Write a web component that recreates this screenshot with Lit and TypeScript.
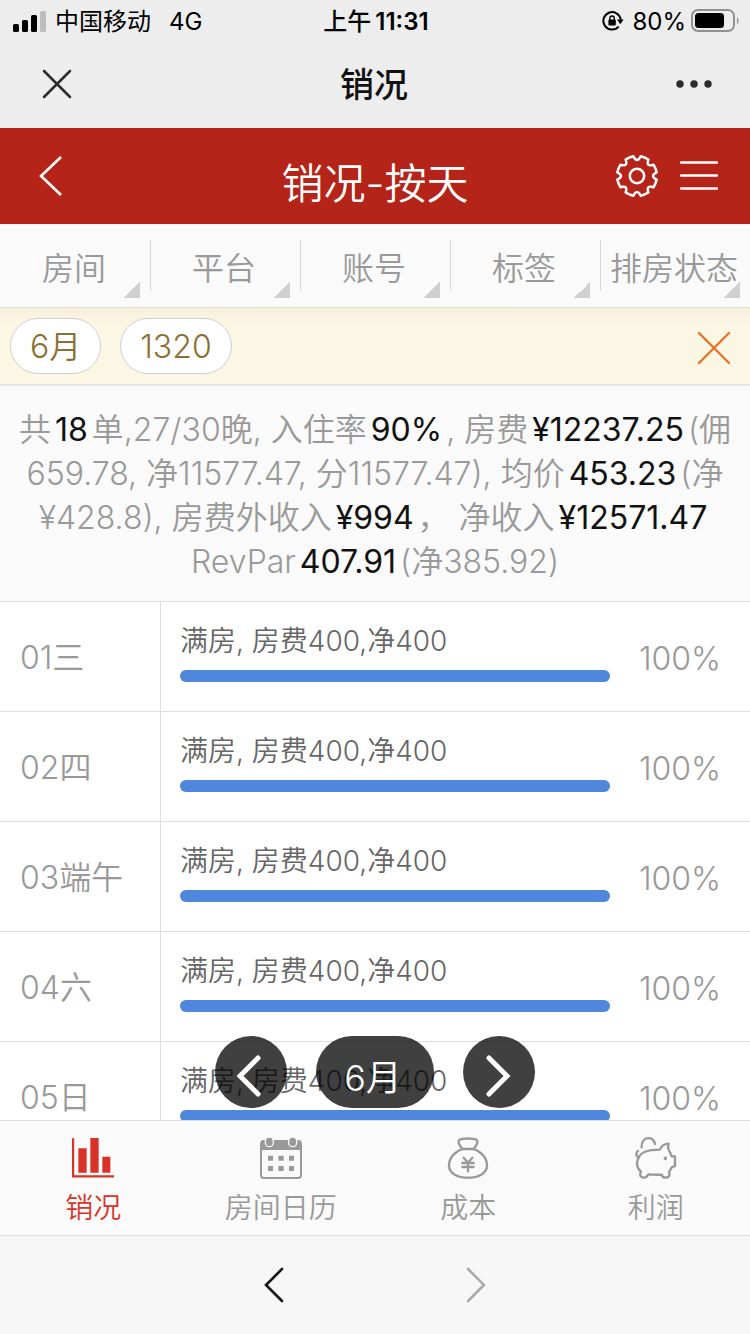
import { LitElement, html, css, svg } from "lit";
import { customElement, property, state } from "lit/decorators.js";
import { classMap } from "lit/directives/class-map.js";
import { styleMap } from "lit/directives/style-map.js";

/** Outline of a cog with eight teeth, centred on the origin. */
function cogPath(outer: number, inner: number): string {
  const point = (radius: number, degrees: number) => {
    const angle = (degrees * Math.PI) / 180;
    return `${(radius * Math.cos(angle)).toFixed(2)} ${(radius * Math.sin(angle)).toFixed(2)}`;
  };
  let d = "";
  for (let i = 0; i < 8; i++) {
    const c = 22.5 + i * 45;
    d += `${i === 0 ? "M" : "L"}${point(outer, c - 12)}`;
    d += `Q${point(outer + 0.3, c)} ${point(outer, c + 12)}`;
    d += `L${point(inner + 1.2, c + 14)}Q${point(inner - 3, c + 22.5)} ${point(inner + 1.2, c + 31)}`;
  }
  return d + "Z";
}

const icons = {
  signal: html`<svg width="34" height="22" viewBox="0 0 34 22" aria-hidden="true">
    <rect x="0" y="14" width="6" height="8" rx="1.5" />
    <rect x="9" y="10" width="6" height="12" rx="1.5" />
    <rect x="18" y="5" width="6" height="17" rx="1.5" />
    <rect x="27" y="1" width="6" height="21" rx="1.5" fill="#bdbdbd" />
  </svg>`,
  lock: html`<svg width="22" height="20" viewBox="0 0 22 20" aria-hidden="true">
    <path d="M16.6 15.6A8.7 8.7 0 1 1 18.700 8.6" fill="none" stroke="#000" stroke-width="2" />
    <path d="M15 8.600h6.600l-3.300 4.600z" />
    <rect x="6.4" y="8.6" width="7.4" height="6" rx="1" />
    <path d="M7.9 9V7.2a2.2 2.2 0 0 1 4.4 0V9" fill="none" stroke="#000" stroke-width="1.4" />
  </svg>`,
  battery: html`<svg width="48" height="24" viewBox="0 0 48 24" aria-hidden="true">
    <rect x="1" y="1" width="42" height="21" rx="6" fill="none" stroke="#929292" stroke-width="2" />
    <rect x="4" y="4" width="29" height="15" rx="3.5" />
    <path d="M46 8c2 1.500 2 6 0 7z" fill="#929292" />
  </svg>`,
  close: html`<svg width="30" height="30" viewBox="0 0 30 30" aria-hidden="true">
    <path d="M2 2 28 28M28 2 2 28" fill="none" stroke="currentColor" stroke-width="2.5" stroke-linecap="round" />
  </svg>`,
  clear: html`<svg width="34" height="34" viewBox="0 0 34 34" aria-hidden="true">
    <path d="M2 2 32 32M32 2 2 32" fill="none" stroke="currentColor" stroke-width="2.4" stroke-linecap="round" />
  </svg>`,
  more: html`<svg width="36" height="8" viewBox="0 0 36 8" aria-hidden="true" fill="currentColor">
    <circle cx="4" cy="4" r="3.7" /><circle cx="18" cy="4" r="3.7" /><circle cx="32" cy="4" r="3.7" />
  </svg>`,
  back: html`<svg width="24" height="42" viewBox="0 0 24 42" aria-hidden="true">
    <path d="M22 2 2 21 22 40" fill="none" stroke="currentColor" stroke-width="2.6" />
  </svg>`,
  cog: html`<svg width="46" height="46" viewBox="-23 -23 46 46" aria-hidden="true" fill="none" stroke="currentColor" stroke-width="2.500" stroke-linejoin="round">
    <path d=${cogPath(20, 17)} /><circle r="7.200" />
  </svg>`,
  menu: html`<svg width="38" height="32" viewBox="0 0 38 32" aria-hidden="true">
    <path d="M1 2.500H37M1 15.500H37M1 28.500H37" fill="none" stroke="currentColor" stroke-width="2.4" stroke-linecap="round" />
  </svg>`,
  left: html`<svg width="28" height="42" viewBox="0 0 28 42" aria-hidden="true">
    <path d="M21 3 3 21 21 39" fill="none" stroke="currentColor" stroke-width="5" stroke-linecap="round" />
  </svg>`,
  right: html`<svg width="26" height="42" viewBox="0 0 26 42" aria-hidden="true">
    <path d="M3 3 21 21 3 39" fill="none" stroke="currentColor" stroke-width="5" stroke-linecap="round" />
  </svg>`,
  historyBack: html`<svg width="20" height="36" viewBox="0 0 20 36" aria-hidden="true">
    <path d="M18 2 2 18 18 34" fill="none" stroke="currentColor" stroke-width="2.600" stroke-linecap="round" />
  </svg>`,
  historyForward: html`<svg width="20" height="36" viewBox="0 0 20 36" aria-hidden="true">
    <path d="M2 2 18 18 2 34" fill="none" stroke="currentColor" stroke-width="2.600" stroke-linecap="round" />
  </svg>`,
};

const tabIcons: Record<string, unknown> = {
  chart: svg`<path d="M3 4V118H126" fill="none" stroke="currentColor" stroke-width="7" />
    <path d="M19 34h25v73H19zM55 3h25v104H55zM91 59h24v48H91z" fill="currentColor" />`,
  calendar: svg`<rect x="3" y="12" width="120" height="111" rx="9" fill="none" stroke="currentColor" stroke-width="6" />
    <path d="M3 39V19q0-9 9-9H114q9 0 9 9V39z" fill="currentColor" />
    <rect x="16" y="0" width="24" height="29" rx="12" fill="currentColor" stroke="#fafafa" stroke-width="4" />
    <rect x="86" y="0" width="24" height="29" rx="12" fill="currentColor" stroke="#fafafa" stroke-width="4" />
    <path d="M24 56h15v15H24zM55 56h16v15H55zM87 56h15v15H87zM24 87h15v15H24zM55 87h16v15H55zM87 87h15v15H87z" fill="currentColor" />`,
  bag: svg`<g fill="none" stroke="currentColor" stroke-width="7" stroke-linecap="round" stroke-linejoin="round">
    <path d="M46 36C42 28 30 19 36 9C46 3 80 3 90 9C96 19 84 28 80 36" />
    <path d="M46 36H80C104 44 120 64 120 86C120 110 92 122 63 122C34 122 6 110 6 86C6 64 22 44 46 36Z" />
    <path d="M50 62 63 77 76 62M63 77V103M46 78H80M46 90H80" />
  </g>`,
  pig: svg`<g fill="none" stroke="currentColor" stroke-width="7" stroke-linecap="round" stroke-linejoin="round">
    <path d="M9 42C2 46 2 58 11 62C18 44 42 38 74 38C80 26 90 20 101 20C97 32 101 42 106 48L110 58H120V87L110 91C108 99 102 102 102 106C106 116 100 122 92 122C84 122 81 118 80 113Q60 114 40 112C37 119 34 122 27 122C16 122 13 114 18 104C5 94 3 76 11 62" />
    <path d="M20 31C18 -2 56 -6 60 21" />
    <circle cx="91" cy="64" r="2" fill="currentColor" />
  </g>`,
};

const baseText = css`
  button, select, a {
    font: inherit;
    color: inherit;
    letter-spacing: inherit;
  }
  button {
    display: flex;
    align-items: center;
    justify-content: center;
    padding: 0;
    border: 0;
    background: none;
    cursor: pointer;
  }
  svg { display: block; flex: none; }
`;

interface Day { label: string; note: string; rate: number; }

@customElement("status-bar")
class StatusBar extends LitElement {
  static styles = [baseText, css`
    :host {
      display: grid;
      grid-template-columns: 1fr auto 1fr;
      align-items: center;
      height: 40px;
      padding: 0 11px 0 13px;
      font-size: 24px;
      line-height: 40px;
      color: #000;
    }
    .group { display: flex; align-items: center; gap: 8px; }
    .group span, .time { padding-top: 2px; }
    .end { justify-content: flex-end; gap: 5px; }
    .group .lock { padding: 0; margin-right: 3px; }
    .network { margin-left: 10px; }
    .time { display: flex; gap: 4px; font-weight: 600; }
    .time .cjk { font-weight: 500; }
  `];
  render() {
    return html`
      <div class="group">${icons.signal}<span>中国移动</span><span class="network">4G</span></div>
      <div class="time"><span class="cjk">上午</span><span>11:31</span></div>
      <div class="group end"><div class="lock">${icons.lock}</div><span>80%</span>${icons.battery}</div>
    `;
  }
}

@customElement("day-row")
class DayRow extends LitElement {
  @property({ attribute: false }) day!: Day;
  static styles = css`
    :host {
      display: grid;
      grid-template-columns: 161px 1fr auto;
      height: 109px;
      border-bottom: 1px solid #dedede;
      color: #999;
      font-size: 32px;
      background: #fff;
    }
    .date {
      display: flex;
      align-items: center;
      padding: 2px 0 0 20px;
      border-right: 1px solid #dedede;
    }
    .detail {
      display: flex;
      flex-direction: column;
      gap: 9px;
      padding: 19px 29px 0 19px;
    }
    .note { font-size: 28px; line-height: 40px; color: #666; white-space: nowrap; }
    .track { height: 12px; border-radius: 6px; background: #eee; }
    .fill { height: 100%; border-radius: 6px; background: #4f87dc; }
    .rate { align-self: center; padding: 4px 29px 0 0; }
  `;
  render() {
    const { label, note, rate } = this.day;
    return html`
      <div class="date">${label}</div>
      <div class="detail">
        <div class="note">${note}</div>
        <div class="track" role="progressbar" aria-label=${label} aria-valuenow=${rate}>
          <div class="fill" style=${styleMap({ width: `${rate}%` })}></div>
        </div>
      </div>
      <div class="rate">${rate}%</div>
    `;
  }
}

@customElement("app-root")
class AppRoot extends LitElement {
  @state() private month = 6;
  @state() private tab = "chart";

  private filters = ["房间", "平台", "账号", "标签", "排房状态"];
  private days: Day[] = ["01三", "02四", "03端午", "04六", "05日"].map((label) => ({
    label,
    note: "满房, 房费400,净400",
    rate: 100,
  }));
  private tabs = [
    { id: "chart", label: "销况" },
    { id: "calendar", label: "房间日历" },
    { id: "bag", label: "成本" },
    { id: "pig", label: "利润" },
  ];

  static styles = [baseText, css`
    :host {
      display: flex;
      flex-direction: column;
      height: 100vh;
      overflow: hidden;
      background: #fafafa;
      color: #999;
      font-family: Inter, "Noto Sans CJK SC", sans-serif;
      font-weight: 350;
      font-size: 32px;
      line-height: 44px;
    }
    .shell { flex: none; background: #ededed; font-weight: 400; }
    .titlebar {
      display: grid;
      grid-template-columns: 1fr auto 1fr;
      align-items: center;
      height: 88px;
      padding: 0 38px;
      color: #2b2b2b;
    }
    .titlebar h1 { margin: 0; padding: 2px 2px 0 0; font-size: 34px; font-weight: 500; color: #111; }
    .titlebar button:last-child { justify-self: end; }
    .titlebar button:first-child { justify-self: start; padding-left: 4px; }
    .header {
      flex: none;
      display: grid;
      grid-template-columns: 1fr auto 1fr;
      align-items: center;
      height: 96px;
      padding: 0 32px;
      background: #b42418;
      color: #fff;
    }
    .header h2 { margin: 0; padding-top: 16px; font-size: 42px; line-height: 60px; font-weight: 350; }
    .header .back { justify-self: start; padding-left: 7px; }
    .actions { display: flex; justify-content: flex-end; align-items: center; gap: 20px; }
    .filters {
      flex: none;
      display: grid;
      grid-template-columns: repeat(5, 1fr);
      height: 83px;
      border-bottom: 1px solid #dfdccf;
    }
    .filter { position: relative; display: flex; align-items: center; }
    .filter:not(:last-child)::before {
      content: "";
      position: absolute;
      right: -1px;
      top: 16px;
      bottom: 16px;
      border-right: 1px solid #d8d8d8;
    }
    .filter::after {
      content: "";
      position: absolute;
      right: 10px;
      bottom: 9px;
      width: 16px;
      height: 16px;
      background: linear-gradient(135deg, transparent 50%, #d0d0d0 50%);
      pointer-events: none;
    }
    .filter select {
      width: 100%;
      height: 100%;
      padding: 6px 2px 0 0;
      border: 0;
      appearance: none;
      background: none;
      text-align: center;
      text-align-last: center;
      white-space: nowrap;
    }
    .chips {
      flex: none;
      display: flex;
      align-items: center;
      gap: 19px;
      height: 76px;
      padding: 0 19px 0 10px;
      border-bottom: 2px solid #e6e6e6;
      background: linear-gradient(#f7f0dc, #fcf6e4 16px);
    }
    .chip {
      height: 56px;
      padding: 2px 19px 0;
      border: 1px solid #cfcfcf;
      border-radius: 28px;
      background: #fff;
      color: #8c6f32;
    }
    .clear { margin-left: auto; padding-top: 4px; color: #e67325; }
    .summary {
      flex: none;
      margin: 0;
      padding: 22px 0 17px;
      border-bottom: 1px solid #dedede;
      text-align: center;
    }
    .summary b { margin: 0 4px; font-weight: 400; color: #111; }
    .board { position: relative; flex: 1; min-height: 0; overflow: hidden; background: #fff; }
    .pager {
      position: absolute;
      left: 0;
      right: 0;
      bottom: 12px;
      display: flex;
      justify-content: center;
      gap: 29px;
    }
    .pager > * {
      display: flex;
      align-items: center;
      justify-content: center;
      box-sizing: border-box;
      height: 72px;
      min-width: 72px;
      padding-top: 8px;
      border-radius: 36px;
      background: rgba(0, 0, 0, 0.75);
      color: #fff;
    }
    .pager .month { min-width: 118px; padding: 12px 4px 0 0; font-size: 36px; }
    .tabs {
      flex: none;
      display: grid;
      grid-template-columns: repeat(4, 1fr);
      height: 114px;
      border-top: 1px solid #dedede;
      border-bottom: 1px solid #dedede;
      font-size: 28px;
      line-height: 40px;
    }
    .tab { flex-direction: column; justify-content: flex-start; gap: 9px; padding: 16px 1px 0 0; }
    .tab.active { color: #d93329; }
    .history {
      flex: none;
      display: flex;
      justify-content: center;
      gap: 182px;
      height: 98px;
      background: #f7f7f7;
      color: #111;
    }
    .history button:disabled { color: #aaa; }
  `];

  render() {
    return html`
      <div class="shell">
        <status-bar></status-bar>
        <div class="titlebar">
          <button aria-label="关闭">${icons.close}</button>
          <h1>销况</h1>
          <button aria-label="更多">${icons.more}</button>
        </div>
      </div>
      <header class="header">
        <button class="back" aria-label="返回">${icons.back}</button>
        <h2>销况-按天</h2>
        <div class="actions">
          <button aria-label="设置">${icons.cog}</button>
          <button aria-label="菜单">${icons.menu}</button>
        </div>
      </header>
      <div class="filters">
        ${this.filters.map((name) => html`
          <div class="filter"><select aria-label=${name}><option>${name}</option></select></div>
        `)}
      </div>
      <div class="chips">
        <button class="chip">${this.month}月</button>
        <button class="chip">1320</button>
        <button class="clear" aria-label="清除">${icons.clear}</button>
      </div>
      <p class="summary">
        共<b>18</b>单,27/30晚, 入住率<b>90%</b>, 房费<b>¥12237.25</b>(佣<br />
        659.78, 净11577.47, 分11577.47), 均价<b>453.23</b>(净<br />
        ¥428.8), 房费外收入<b>¥994</b>， 净收入<b>¥12571.47</b><br />
        RevPar<b>407.91</b>(净385.92)
      </p>
      <main class="board">
        ${this.days.map((day) => html`<day-row .day=${day}></day-row>`)}
        <div class="pager">
          <button aria-label="上个月" @click=${() => (this.month = this.month === 1 ? 12 : this.month - 1)}>${icons.left}</button>
          <button class="month">${this.month}月</button>
          <button aria-label="下个月" @click=${() => (this.month = (this.month % 12) + 1)}>${icons.right}</button>
        </div>
      </main>
      <nav class="tabs">
        ${this.tabs.map(({ id, label }) => html`
          <button class=${classMap({ tab: true, active: id === this.tab })} @click=${() => (this.tab = id)}>
            <svg width="42" height="42" viewBox="0 0 126 126" aria-hidden="true">${tabIcons[id]}</svg>
            <span>${label}</span>
          </button>
        `)}
      </nav>
      <div class="history">
        <button aria-label="后退">${icons.historyBack}</button>
        <button aria-label="前进" disabled>${icons.historyForward}</button>
      </div>
    `;
  }
}
